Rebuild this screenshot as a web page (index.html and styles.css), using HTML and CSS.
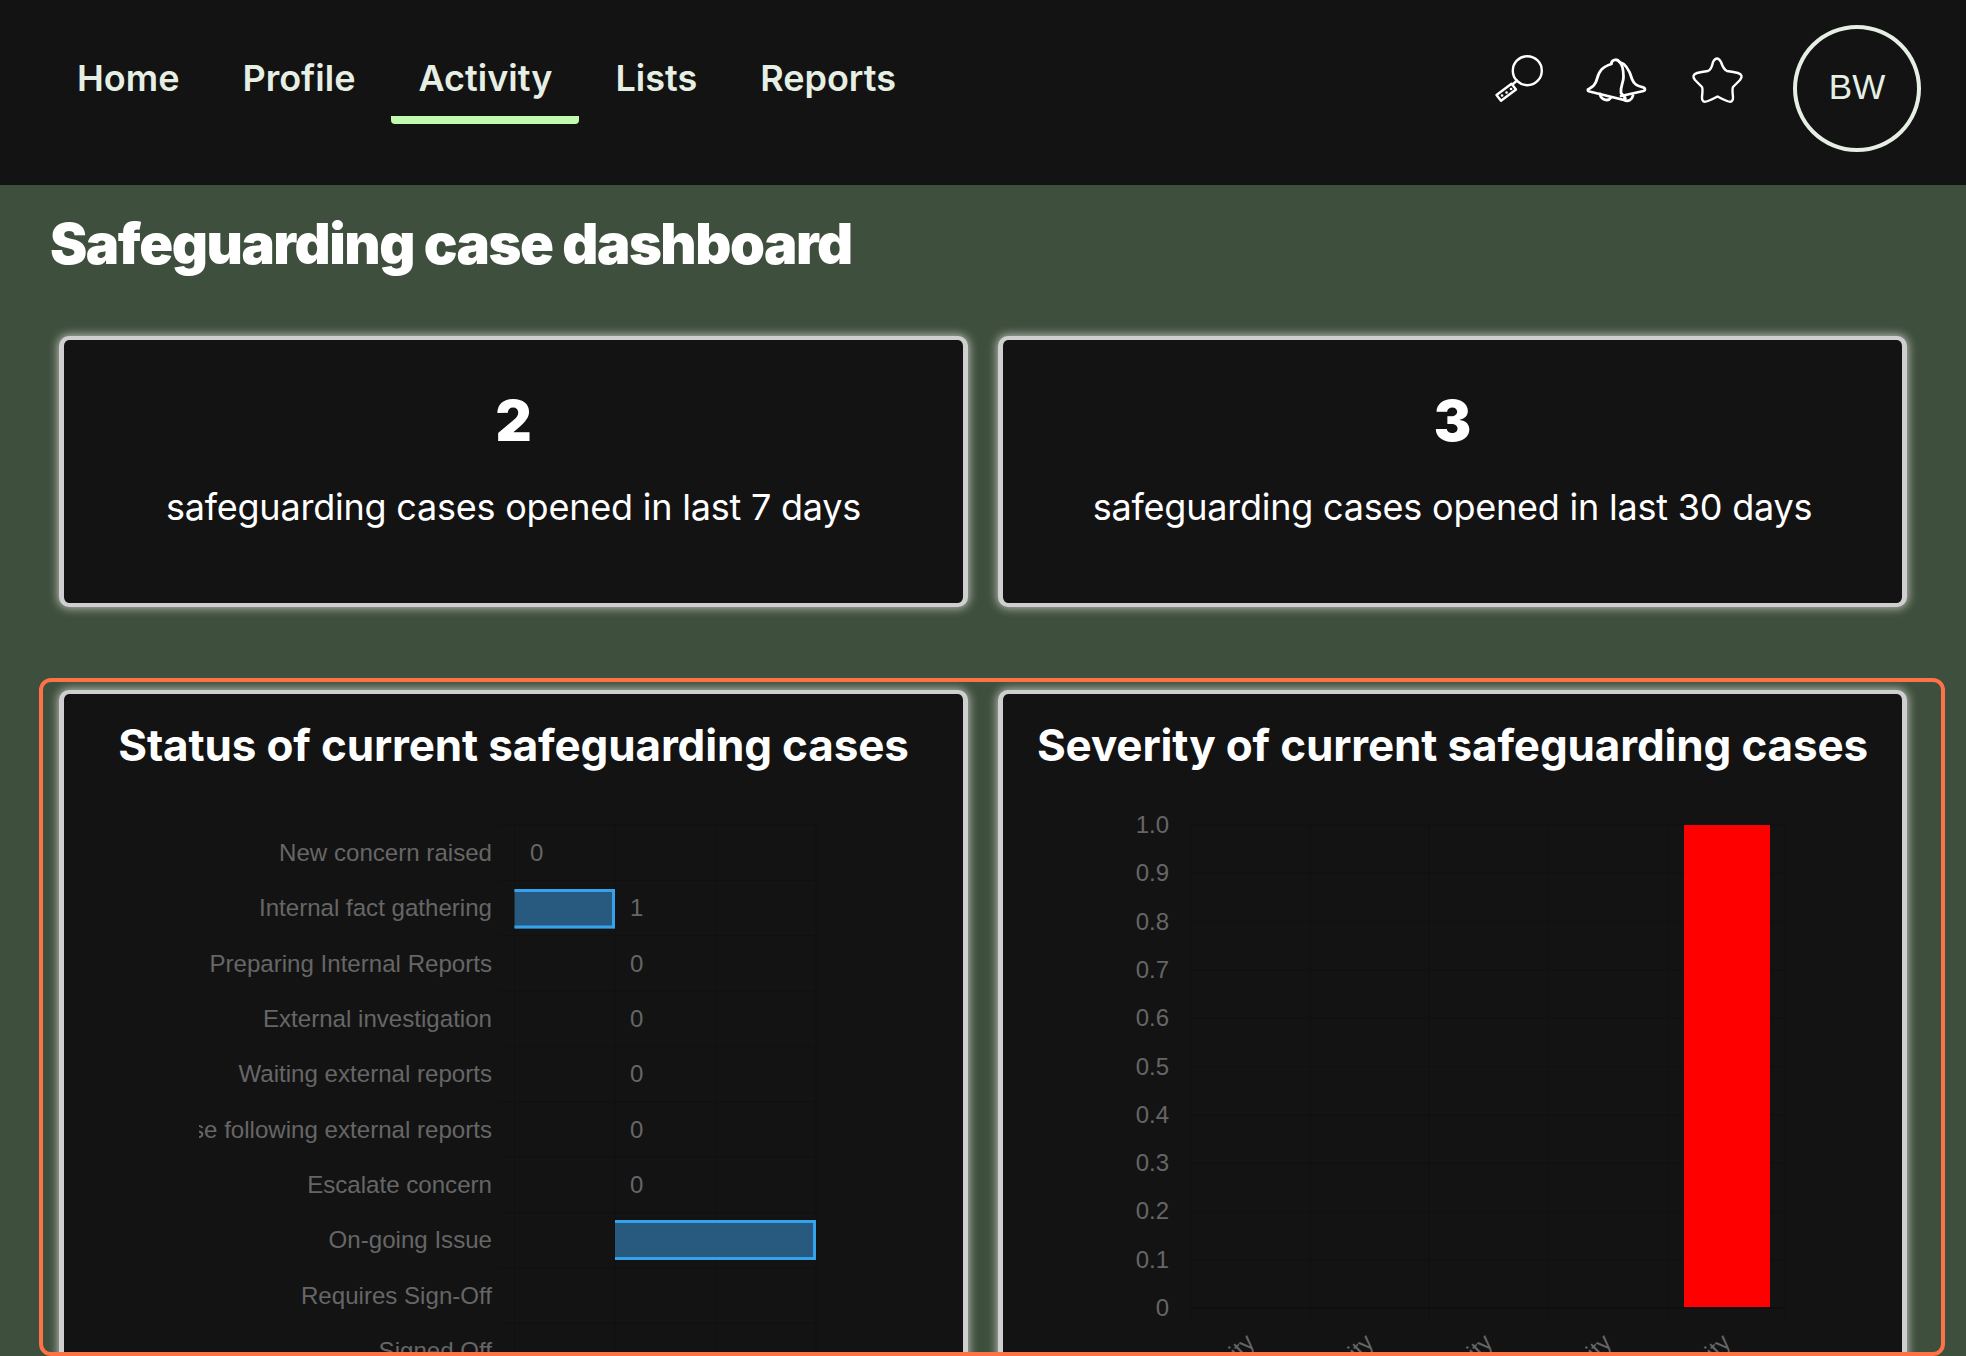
FILE: index.html
```html
<!DOCTYPE html>
<html lang="en">
<head>
<meta charset="utf-8">
<title>Safeguarding case dashboard</title>
<link rel="stylesheet" href="styles.css">
</head>
<body>
<header class="topbar">
  <nav class="nav">
    <a class="nav-link">Home</a>
    <a class="nav-link">Profile</a>
    <a class="nav-link is-active">Activity</a>
    <a class="nav-link">Lists</a>
    <a class="nav-link">Reports</a>
  </nav>
  <div class="tools">
    <svg class="tool" viewBox="0 0 70 60" aria-label="Search">
      <circle cx="37.3" cy="20.7" r="14.5"/>
      <path d="M27 30.5 L22.5 34.5"/>
      <path d="M6.5 45 L21.5 33.8 L26 39.5 L11 50.8 Z"/>
      <path class="dots" d="M12 45.5 h.1 M16.5 42.5 h.1 M21 39 h.1"/>
    </svg>
    <svg class="tool tool-bell" viewBox="0 0 70 60" aria-label="Notifications">
      <path d="M8 39.5 C12 37 15 36 17 29 C19 21 22 17 31.5 14 C31 10 37 8 39.5 12 C43 15 43.5 21 43.5 27 C43.5 33 40 37 41 43 L45 47.5 C46 49.5 44 50 42 49.5 L9.5 41.5 C8 41 7.5 40.5 8 39.5 Z"/>
      <path d="M39.5 12 C47 14 50 22 52 29 C54 35 58 36 63.5 37.5 C65.5 38.5 65.5 40.5 63.5 41 L41 46"/>
      <path d="M20 44 C21 50 28 52 31 47.5"/>
      <path d="M44 50 C48 52 52 50 53 45.5"/>
    </svg>
    <svg class="tool tool-star" viewBox="0 0 70 60" aria-label="Favourites">
      <path d="M33 12 Q37 5 41 12 Q43.5 19.5 47 21 Q54 22 58 23 Q64 25 60 30 Q56 34 53 37 Q52 39 53 47 Q53.5 53.5 47 51 Q42 49 37.5 46.5 Q33 49 28 51 Q21.5 53.5 22 47 Q23 39 22 37 Q19 34 15 30 Q11 25 17 23 Q21 22 28 21 Q31.5 19.5 33 12 Z"/>
    </svg>
    <div class="avatar">BW</div>
  </div>
</header>

<main class="page">
  <h1 class="page-title">Safeguarding case dashboard</h1>

  <section class="stats">
    <article class="card stat">
      <div class="stat-value">2</div>
      <p class="stat-label">safeguarding cases opened in last 7 days</p>
    </article>
    <article class="card stat">
      <div class="stat-value">3</div>
      <p class="stat-label">safeguarding cases opened in last 30 days</p>
    </article>
  </section>

  <section class="charts">
    <article class="card chart-card">
      <h2 class="chart-title">Status of current safeguarding cases</h2>
      <svg class="chart chart-status" viewBox="199 810 640 560">
        <g class="grid">
          <path d="M514.5 825V1370 M615 825V1370 M715.5 825V1370 M816 825V1370"/>
          <path d="M499 826H816 M499 881.5H816 M499 936.5H816 M499 992H816 M499 1047.5H816 M499 1103H816 M499 1158H816 M499 1214H816 M499 1269H816 M499 1324H816"/>
        </g>
        <g class="bar">
          <path class="bar-fill" d="M514.5 890H615V929.5H514.5Z"/>
          <path class="bar-edge" d="M514.5 891.5H613.5V928H514.5"/>
          <path class="bar-fill" d="M615 1221H816V1261H615Z"/>
          <path class="bar-edge" d="M615 1222.500H814.500V1259.500H615"/>
        </g>
        <g class="tick tick-end">
          <text x="492" y="862">New concern raised</text>
          <text x="492" y="917">Internal fact gathering</text>
          <text x="492" y="972.500">Preparing Internal Reports</text>
          <text x="492" y="1028">External investigation</text>
          <text x="492" y="1083">Waiting external reports</text>
          <text x="492" y="1138.500">Close following external reports</text>
          <text x="492" y="1194">Escalate concern</text>
          <text x="492" y="1249">On-going Issue</text>
          <text x="492" y="1304.500">Requires Sign-Off</text>
          <text x="492" y="1360">Signed Off</text>
        </g>
        <g class="tick">
          <text x="530" y="862">0</text>
          <text x="630" y="917">1</text>
          <text x="630" y="972.500">0</text>
          <text x="630" y="1028">0</text>
          <text x="630" y="1083">0</text>
          <text x="630" y="1138.500">0</text>
          <text x="630" y="1194">0</text>
        </g>
      </svg>
    </article>
    <article class="card chart-card">
      <h2 class="chart-title">Severity of current safeguarding cases</h2>
      <svg class="chart chart-severity" viewBox="1100 810 760 560">
        <g class="grid">
          <path d="M1191 826V1324 M1310 826V1324 M1429 826V1324 M1547.500 826V1324 M1667.500 826V1324 M1785 826V1324"/>
          <path d="M1191 826H1785 M1191 874H1785 M1191 922.500H1785 M1191 971H1785 M1191 1019H1785 M1191 1067.500H1785 M1191 1116H1785 M1191 1164H1785 M1191 1212.500H1785 M1191 1261H1785"/>
          <path class="grid-zero" d="M1191 1309H1785"/>
        </g>
        <rect class="bar-red" x="1684" y="826" width="86" height="482"/>
        <g class="tick tick-end">
          <text x="1169" y="834">1.0</text>
          <text x="1169" y="882.300">0.9</text>
          <text x="1169" y="930.600">0.8</text>
          <text x="1169" y="978.900">0.7</text>
          <text x="1169" y="1027.200">0.6</text>
          <text x="1169" y="1075.500">0.5</text>
          <text x="1169" y="1123.800">0.4</text>
          <text x="1169" y="1172.100">0.3</text>
          <text x="1169" y="1220.400">0.2</text>
          <text x="1169" y="1268.700">0.1</text>
          <text x="1169" y="1317">0</text>
        </g>
        <g class="tick tick-end">
          <text transform="rotate(-45 1256 1345)" x="1256" y="1345">Severity</text>
          <text transform="rotate(-45 1375 1345)" x="1375" y="1345">Severity</text>
          <text transform="rotate(-45 1494 1345)" x="1494" y="1345">Severity</text>
          <text transform="rotate(-45 1613 1345)" x="1613" y="1345">Severity</text>
          <text transform="rotate(-45 1732 1345)" x="1732" y="1345">Severity</text>
        </g>
      </svg>
    </article>
  </section>
</main>
</body>
</html>
```
FILE: styles.css
```css
* { box-sizing: border-box; }

html, body {
  height: 100%;
}

body {
  margin: 0;
  overflow: hidden;
  background: #3f4f3d;
  font-family: Inter, "Liberation Sans", sans-serif;
  color: #fff;
}

.topbar {
  height: 185px;
  background: #131313;
  display: flex;
  justify-content: space-between;
  padding: 0 45px 0 50px;
}

.nav {
  display: flex;
  gap: 9px;
  padding-top: 57px;
}

.nav-link {
  display: block;
  padding: 0 27px;
  font-size: 36px;
  font-weight: 600;
  line-height: 42px;
  color: #e6efe3;
}

.nav-link::after {
  content: "";
  display: block;
  height: 8px;
  margin: 17px -27px 0;
  border-radius: 0 0 4px 4px;
}

.nav-link.is-active::after {
  background: #c2fbb0;
}

.tools {
  display: flex;
  align-items: flex-start;
  padding-top: 25px;
}

.tool {
  width: 70px;
  height: 60px;
  margin-top: 25px;
  margin-right: 20px;
  fill: none;
  stroke: #fff;
  stroke-width: 2.4;
  stroke-linecap: round;
  stroke-linejoin: round;
}

.tool-bell { stroke-width: 2.8; }

.tool .dots { stroke-width: 2.6; }

.tool-star { margin-left: 10px; margin-right: 43px; }

.avatar {
  width: 128px;
  height: 127px;
  padding-bottom: 4px;
  border: 4px solid #e6efe3;
  border-radius: 50%;
  display: flex;
  align-items: center;
  justify-content: center;
  font-family: "Liberation Sans", Arial, sans-serif;
  font-size: 35px;
  color: #e6efe3;
}

.page {
  height: calc(100vh - 185px);
  overflow: hidden;
  padding: 0 59px;
}

.page-title {
  margin: 25px 0 0 -9px;
  font-size: 56px;
  line-height: 68px;
  font-weight: 900;
  letter-spacing: -1.45px;
  color: #fff;
}

.stats {
  display: grid;
  grid-template-columns: 1fr 1fr;
  gap: 30px;
  margin-top: 58px;
}

.card {
  background: #131313;
  border-style: solid;
  border-color: #cfcfcf;
  border-width: 4px 5px;
  border-radius: 10px;
  box-shadow: 0 0 10px 1px rgba(255, 255, 255, 0.65);
}

.stat {
  height: 271px;
  padding-top: 47px;
  text-align: center;
}

.stat-value {
  font-size: 56px;
  font-weight: 900;
  line-height: 68px;
}

.stat-label {
  margin: 30px 0 0;
  font-size: 36px;
  line-height: 44px;
  font-weight: 400;
  letter-spacing: -0.22px;
}

.charts {
  position: relative;
  display: grid;
  grid-template-columns: 1fr 1fr;
  gap: 30px;
  margin-top: 83px;
}

.charts::after {
  content: "";
  position: absolute;
  top: -12px;
  left: -20px;
  right: -38px;
  height: 670px;
  border: 4px solid #ff7245;
  border-radius: 12px;
  pointer-events: none;
}

.chart-card {
  height: 800px;
  text-align: center;
  overflow: hidden;
}

.chart-title {
  height: 115px;
  margin: 0;
  padding-top: 24px;
  font-size: 44px;
  line-height: 54px;
  font-weight: 700;
  letter-spacing: -0.15px;
}

.chart {
  display: block;
  height: 560px;
}

.chart-status {
  width: 640px;
  margin-left: 135px;
}

.chart-severity {
  width: 760px;
  margin-left: 97px;
}

.grid path {
  fill: none;
  stroke: #101010;
  stroke-width: 1;
}

.grid .grid-zero { stroke: #0c0c0c; }

.bar-fill { fill: #275a7e; }

.bar-edge {
  fill: none;
  stroke: #36a2eb;
  stroke-width: 3;
}

.bar-red { fill: #ff0000; }

.tick text {
  font-family: "Liberation Sans", Arial, sans-serif;
  font-size: 24px;
  fill: #666;
}

.chart-status .tick-end text { font-size: 24.1px; }

.tick-end text { text-anchor: end; }
```
